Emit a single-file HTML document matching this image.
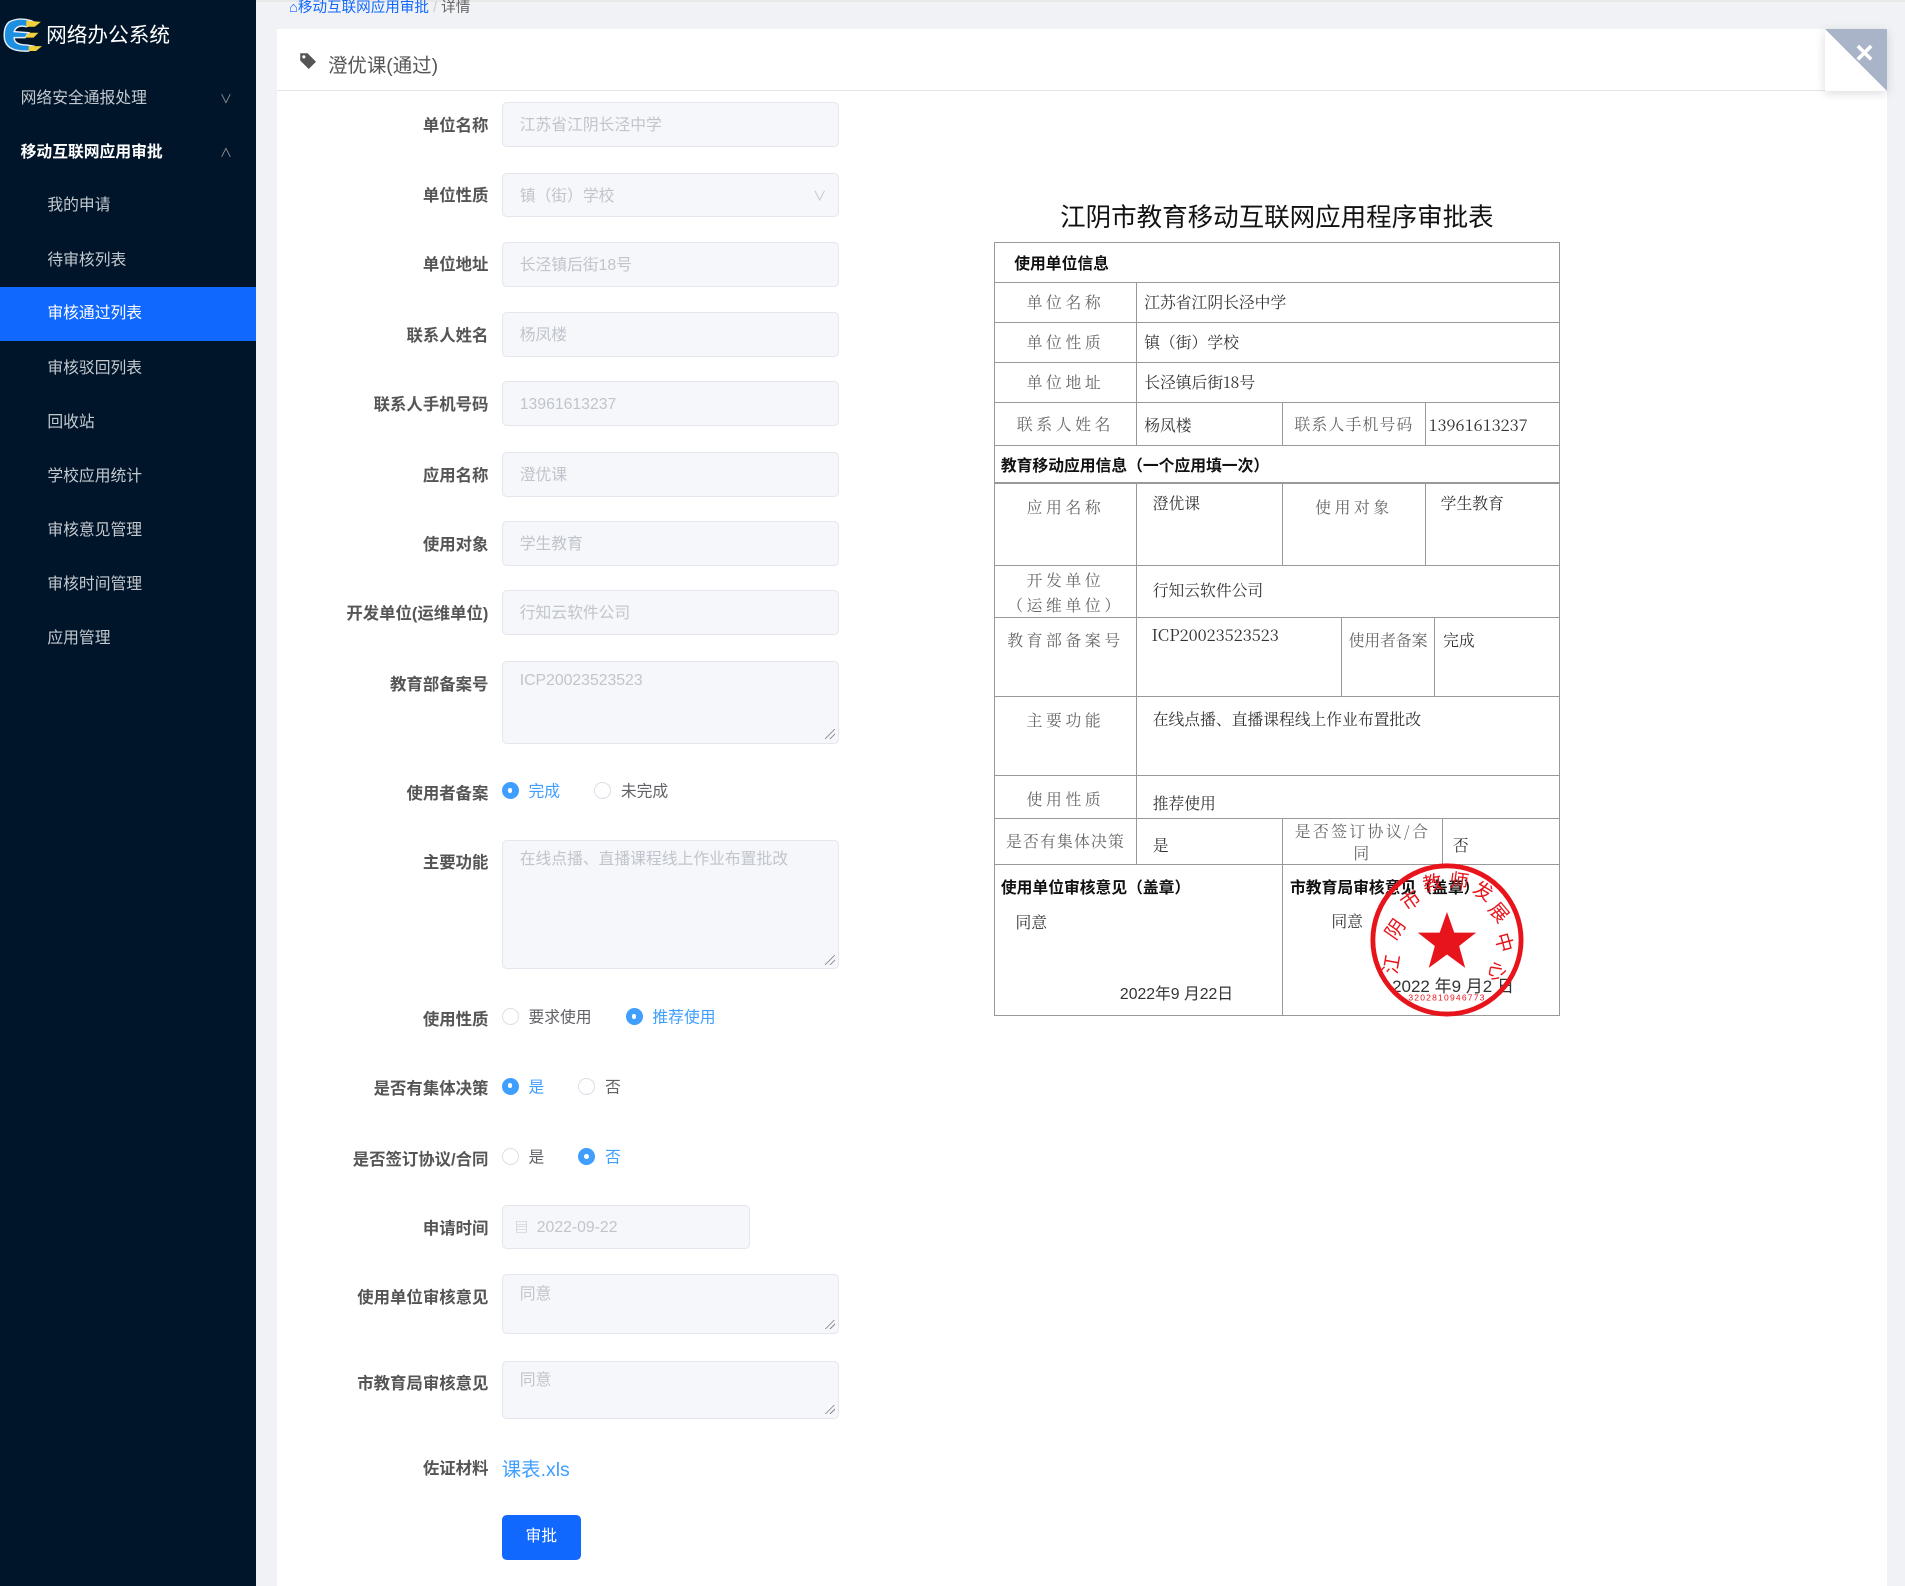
<!DOCTYPE html>
<html><head><meta charset="utf-8">
<style>
*{box-sizing:border-box;margin:0;padding:0}
html,body{width:1905px;height:1586px;overflow:hidden;background:#f0f2f5}
#w{zoom:1.21492;position:relative;width:1568px;height:1306px;font-family:"Liberation Sans","Noto Sans CJK SC",sans-serif;background:#f0f2f5;overflow:hidden}
.a{position:absolute}
#side{left:0;top:0;width:211px;height:1306px;background:#001529}
.mi{position:absolute;left:0;width:211px;height:44px;line-height:48px;font-size:13px;color:#c4c9d0}
.mi.sub{padding-left:39px}
.mi.top{padding-left:17px}
.lab{position:absolute;left:240px;width:162px;text-align:right;font-size:13.5px;color:#555;font-weight:bold;margin-top:-2px}
.inp{position:absolute;left:413px;width:278px;height:37px;background:#f5f7fa;border:1px solid #e4e7ed;border-radius:4px;font-size:13px;color:#c0c4cc;padding-left:14px;line-height:38px}
.ta{line-height:20px;padding-top:6px}
.rs{position:absolute;right:3px;bottom:3px;width:8px;height:8px;background:linear-gradient(135deg,transparent 45%,#888 46%,#888 52%,transparent 53%,transparent 70%,#888 71%,#888 77%,transparent 78%)}
.rad{position:absolute;font-size:13px;color:#606266;height:16px;line-height:16px}
.rad i{display:inline-block;width:14px;height:14px;border:1px solid #dcdfe6;border-radius:50%;vertical-align:-2px;margin-right:8px;background:#fff}
.rad.on{color:#409eff}
.rad.on i{background:#409eff;border-color:#409eff;position:relative}
.rad.on i:after{content:"";position:absolute;left:4px;top:4px;width:4px;height:4px;border-radius:50%;background:#fff}
.c{position:absolute;border:1px solid #999;font-family:"Noto Serif CJK SC","Liberation Serif",serif;font-size:13px;color:#333}
.h{font-family:"Noto Sans CJK SC",sans-serif;font-weight:bold;color:#111}
.l{color:#666;letter-spacing:3px;text-align:center}
</style></head><body><div id="w">
<div class="a" style="left:0;top:0;width:1568px;height:2px;background:#e8e8e8"></div>
<div id="side" class="a">
 <svg class="a" style="left:2px;top:14px" width="34" height="30" viewBox="0 0 34 30"><path d="M6 4 Q14 0 24 3 L28 5 L20 8 Q12 6 10 12 L22 13 L19 17 L10 17 Q10 23 20 23 L26 24 L22 28 Q4 29 2 18 Q1 8 6 4Z" fill="#1c8fe0" stroke="#e6edf5" stroke-width="1.2"/><path d="M20 3 L32 4 L27 8 L20 8Z M22 13 L30 13 L26 17 L19 17Z M22 24 L33 24 L28 28 L22 28Z" fill="#f1d03a"/></svg>
 <div class="a" style="left:38px;top:15px;font-size:17px;color:#fff">网络办公系统</div>
 <div class="mi top" style="top:58px">网络安全通报处理<span class="a" style="right:20px;top:0;font-size:10px;color:#999">∨</span></div>
 <div class="mi top" style="top:102px;color:#fff;font-weight:bold">移动互联网应用审批<span class="a" style="right:20px;top:0;font-size:10px;color:#999;font-weight:normal">∧</span></div>
 <div class="mi sub" style="top:146px">我的申请</div>
 <div class="mi sub" style="top:191px">待审核列表</div>
 <div class="mi sub" style="top:236px;height:45px;line-height:45px;background:#1068ff;color:#fff">审核通过列表</div>
 <div class="mi sub" style="top:280px">审核驳回列表</div>
 <div class="mi sub" style="top:324px">回收站</div>
 <div class="mi sub" style="top:369px">学校应用统计</div>
 <div class="mi sub" style="top:413px">审核意见管理</div>
 <div class="mi sub" style="top:458px">审核时间管理</div>
 <div class="mi sub" style="top:502px">应用管理</div>
</div>
<div class="a" style="left:238px;top:-3px;font-size:12px;color:#1068ff">⌂移动互联网应用审批 <span style="color:#ccc">/</span> <span style="color:#666">详情</span></div>
<div class="a" style="left:228px;top:24px;width:1325px;height:1290px;background:#fff"></div>
<div class="a" style="left:228px;top:74px;width:1325px;height:1px;background:#e4e4e4"></div>
<svg class="a" style="left:246px;top:43px" width="15" height="15" viewBox="0 0 15 15"><path d="M1 1 L7 1 L14 8 L8 14 L1 7Z" fill="#555"/><circle cx="4" cy="4" r="1.3" fill="#fff"/></svg>
<div class="a" style="left:270px;top:40px;font-size:16px;color:#555">澄优课(通过)</div>
<svg class="a" style="left:1502px;top:24px;box-shadow:0 2px 8px rgba(0,0,0,.15)" width="51" height="51"><rect width="51" height="51" fill="#fff"/><path d="M0 0H51V51Z" fill="#a9b4c8"/><path d="M27 14L38 25M38 14L27 25" stroke="#fff" stroke-width="3"/></svg>

<div class="lab" style="top:94px">单位名称</div><div class="inp" style="top:84px">江苏省江阴长泾中学</div>
<div class="lab" style="top:152px">单位性质</div><div class="inp" style="top:142px">镇（街）学校<span class="a" style="right:10px;top:0;font-size:11px">∨</span></div>
<div class="lab" style="top:209px">单位地址</div><div class="inp" style="top:199px">长泾镇后街18号</div>
<div class="lab" style="top:267px">联系人姓名</div><div class="inp" style="top:257px">杨凤楼</div>
<div class="lab" style="top:324px">联系人手机号码</div><div class="inp" style="top:314px">13961613237</div>
<div class="lab" style="top:382px">应用名称</div><div class="inp" style="top:372px">澄优课</div>
<div class="lab" style="top:439px">使用对象</div><div class="inp" style="top:429px">学生教育</div>
<div class="lab" style="top:496px">开发单位(运维单位)</div><div class="inp" style="top:486px">行知云软件公司</div>
<div class="lab" style="top:554px">教育部备案号</div><div class="inp ta" style="top:544px;height:68px">ICP20023523523<div class="rs"></div></div>
<div class="lab" style="top:644px">使用者备案</div>
<div class="rad on" style="left:413px;top:644px"><i></i>完成</div><div class="rad" style="left:489px;top:644px"><i></i>未完成</div>
<div class="lab" style="top:701px">主要功能</div><div class="inp ta" style="top:691px;height:107px">在线点播、直播课程线上作业布置批改<div class="rs"></div></div>
<div class="lab" style="top:830px">使用性质</div>
<div class="rad" style="left:413px;top:830px"><i></i>要求使用</div><div class="rad on" style="left:515px;top:830px"><i></i>推荐使用</div>
<div class="lab" style="top:887px">是否有集体决策</div>
<div class="rad on" style="left:413px;top:887px"><i></i>是</div><div class="rad" style="left:476px;top:887px"><i></i>否</div>
<div class="lab" style="top:945px">是否签订协议/合同</div>
<div class="rad" style="left:413px;top:945px"><i></i>是</div><div class="rad on" style="left:476px;top:945px"><i></i>否</div>
<div class="lab" style="top:1002px">申请时间</div><div class="inp" style="top:992px;width:204px;height:36px;padding-left:28px;line-height:36px"><span class="a" style="left:10px;top:0;font-size:11px">▤</span>2022-09-22</div>
<div class="lab" style="top:1059px">使用单位审核意见</div><div class="inp ta" style="top:1049px;height:49px">同意<div class="rs"></div></div>
<div class="lab" style="top:1130px">市教育局审核意见</div><div class="inp ta" style="top:1120px;height:48px">同意<div class="rs"></div></div>
<div class="lab" style="top:1200px">佐证材料</div><div class="a" style="left:413px;top:1196px;font-size:16px;color:#409eff">课表.xls</div>
<div class="a" style="left:413px;top:1247px;width:65px;height:37px;background:#1068ff;border-radius:4px;color:#fff;font-size:13px;text-align:center;line-height:37px">审批</div>

<div class="a" style="left:818px;top:162px;width:466px;text-align:center;font-size:21px;color:#111;font-family:'Noto Sans CJK SC',sans-serif">江阴市教育移动互联网应用程序审批表</div>
<div class="c" style="left:818px;top:199px;width:466px;height:637px;border-color:#888"></div>
<div class="c h" style="left:818px;top:199px;width:466px;height:34px;padding:7px 16px">使用单位信息</div>
<div class="c l" style="left:818px;top:232px;width:118px;height:34px;line-height:32px">单位名称</div><div class="c" style="left:935px;top:232px;width:349px;height:34px;line-height:32px;padding-left:6px">江苏省江阴长泾中学</div>
<div class="c l" style="left:818px;top:265px;width:118px;height:34px;line-height:32px">单位性质</div><div class="c" style="left:935px;top:265px;width:349px;height:34px;line-height:32px;padding-left:6px">镇（街）学校</div>
<div class="c l" style="left:818px;top:298px;width:118px;height:34px;line-height:32px">单位地址</div><div class="c" style="left:935px;top:298px;width:349px;height:34px;line-height:32px;padding-left:6px">长泾镇后街18号</div>
<div class="c l" style="left:818px;top:331px;width:118px;height:36px;line-height:34px">联系人姓名</div><div class="c" style="left:935px;top:331px;width:121px;height:36px;padding:8px 6px">杨凤楼</div>
<div class="c l" style="left:1055px;top:331px;width:119px;height:36px;line-height:34px;letter-spacing:1px">联系人手机号码</div><div class="c" style="left:1173px;top:331px;width:111px;height:36px;line-height:36px;padding-left:2px;font-size:13.5px">13961613237</div>
<div class="c h" style="left:818px;top:366px;width:466px;height:32px;padding:6px 5px">教育移动应用信息（一个应用填一次）</div>
<div class="c l" style="left:818px;top:397px;width:118px;height:69px;padding-top:10px">应用名称</div><div class="c" style="left:935px;top:397px;width:121px;height:69px;padding:6px 13px">澄优课</div>
<div class="c l" style="left:1055px;top:397px;width:119px;height:69px;padding-top:10px">使用对象</div><div class="c" style="left:1173px;top:397px;width:111px;height:69px;padding:6px 12px">学生教育</div>
<div class="c l" style="left:818px;top:465px;width:118px;height:44px;line-height:20px;padding-top:2px">开发单位<br>（运维单位）</div><div class="c" style="left:935px;top:465px;width:349px;height:44px;line-height:40px;padding-left:13px">行知云软件公司</div>
<div class="c l" style="left:818px;top:508px;width:118px;height:66px;padding-top:8px">教育部备案号</div><div class="c" style="left:935px;top:508px;width:170px;height:66px;padding:3px 12px;font-size:13.5px">ICP20023523523</div>
<div class="c l" style="left:1104px;top:508px;width:77px;height:66px;padding-top:8px;letter-spacing:0">使用者备案</div><div class="c" style="left:1180px;top:508px;width:104px;height:66px;padding:8px 7px">完成</div>
<div class="c l" style="left:818px;top:573px;width:118px;height:66px;padding-top:9px">主要功能</div><div class="c" style="left:935px;top:573px;width:349px;height:66px;padding:8px 13px">在线点播、直播课程线上作业布置批改</div>
<div class="c l" style="left:818px;top:638px;width:118px;height:36px;padding-top:9px">使用性质</div><div class="c" style="left:935px;top:638px;width:349px;height:36px;padding:12px 13px 0">推荐使用</div>
<div class="c l" style="left:818px;top:673px;width:118px;height:39px;line-height:37px;letter-spacing:1px">是否有集体决策</div><div class="c" style="left:935px;top:673px;width:121px;height:39px;line-height:42px;padding-left:13px">是</div>
<div class="c l" style="left:1055px;top:673px;width:133px;height:39px;line-height:18px;padding-top:1px;letter-spacing:2px">是否签订协议/合<br>同</div><div class="c" style="left:1187px;top:673px;width:97px;height:39px;line-height:42px;padding-left:8px">否</div>
<div class="c" style="left:818px;top:711px;width:238px;height:125px"><div class="a h" style="left:5px;top:8px">使用单位审核意见（盖章）</div><div class="a" style="left:17px;top:37px">同意</div><div class="a" style="left:103px;top:96px;font-family:'Liberation Sans','Noto Sans CJK SC',sans-serif">2022年9 月22日</div></div>
<div class="c" style="left:1055px;top:711px;width:229px;height:125px"><div class="a h" style="left:6px;top:8px">市教育局审核意见（盖章）</div><div class="a" style="left:40px;top:36px">同意</div><div class="a" style="left:90px;top:88px;font-family:'Liberation Sans','Noto Sans CJK SC',sans-serif;font-size:14px">2022 年9 月2 日</div></div>
<svg class="a" style="left:1126px;top:709px" width="130" height="130" viewBox="0 0 130 130">
 <circle cx="65" cy="65" r="61" fill="none" stroke="#e8141b" stroke-width="4"/>
 <polygon points="65,42 71,59 89,59 75,70 80,88 65,77 50,88 55,70 41,59 59,59" fill="#e8141b"/>
 <g fill="#e8141b" font-size="16" font-family="Noto Sans CJK SC,sans-serif">
  <text x="12" y="90" transform="rotate(-80 20 85)">江</text><text x="14" y="62" transform="rotate(-55 22 56)">阴</text><text x="27" y="38" transform="rotate(-35 35 32)">市</text><text x="45" y="24" transform="rotate(-12 52 18)">教</text><text x="67" y="22" transform="rotate(8 74 16)">师</text><text x="87" y="30" transform="rotate(30 94 24)">发</text><text x="100" y="48" transform="rotate(50 108 42)">展</text><text x="105" y="72" transform="rotate(75 112 66)">中</text><text x="100" y="96" transform="rotate(100 107 90)">心</text>
 </g>
 <text x="65" y="115" fill="#e8141b" font-size="7" text-anchor="middle" font-family="Liberation Sans,sans-serif" letter-spacing="1">3202810946773</text>
</svg>
</div></body></html>
